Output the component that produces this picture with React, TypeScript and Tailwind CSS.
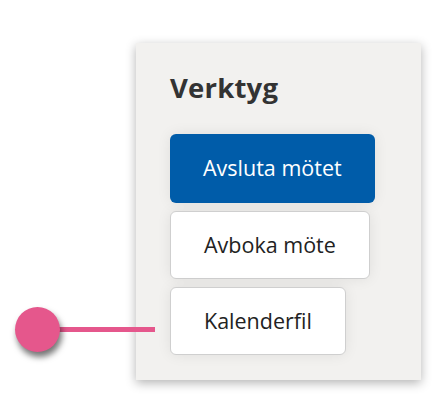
const buttons = [
  { label: 'Avsluta mötet', primary: true },
  { label: 'Avboka möte', primary: false },
  { label: 'Kalenderfil', primary: false },
]

export default function App() {
  return (
    <div className="relative w-[437px] h-[412px] bg-white font-['Open_Sans',sans-serif]">
      <div className="absolute left-[136px] top-[43px] w-[285px] h-[337px] bg-[#f2f1ef] shadow-[0_3px_10px_rgba(0,0,0,0.3)] pl-[34px] pt-[26px]">
        <h2 className="text-[27.5px] font-bold text-[#333] leading-[38px] tracking-[0.2px]">Verktyg</h2>
        <div className="flex flex-col items-start gap-2 mt-[27px]">
          {buttons.map((b) => (
            <button
              key={b.label}
              className={
                b.primary
                  ? 'h-[69px] px-[33px] rounded-md bg-[#005ca9] text-white text-[21.5px] shadow-[0_0_14px_rgba(0,0,0,0.08)]'
                  : 'h-[68px] px-[33px] rounded-md bg-white border border-[#cfcfcf] text-[#222] text-[21.5px] shadow-[0_0_14px_rgba(0,0,0,0.08)]'
              }
            >
              {b.label}
            </button>
          ))}
        </div>
      </div>
      <div className="absolute left-[58px] top-[327px] w-[97px] h-[5px] bg-[#e5578c]" />
      <div className="absolute left-[15px] top-[307px] w-[45px] h-[45px] rounded-full bg-[#e5578c] shadow-[2px_5px_6px_rgba(0,0,0,0.55)]" />
    </div>
  )
}
